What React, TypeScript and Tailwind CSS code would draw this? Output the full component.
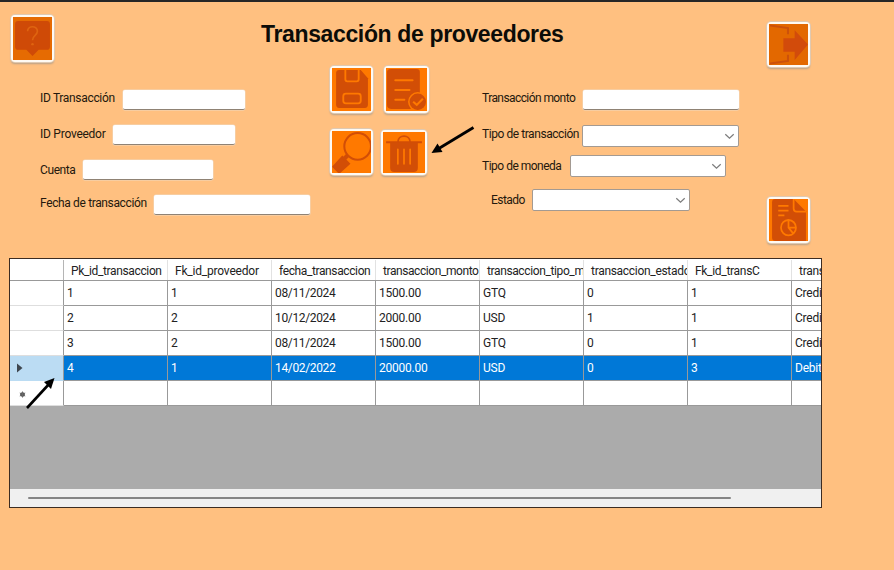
import React from "react";

const ORANGE = "#ff7900";
const DARK = "#d24e06";

function IconButton({ className, children }: { className: string; children: React.ReactNode }) {
  return (
    <button
      className={`shrink-0 rounded-[4px] border-[2.5px] border-[#fffaf3] shadow-[0_0_0_1px_#dfc9b2,0_2px_2px_#b9a188] ${className}`}
    >
      {children}
    </button>
  );
}

function TextField({ label, labelClass, inputClass, rowClass }: Record<string, string>) {
  return (
    <div className={`flex ${rowClass}`}>
      <label className={`shrink-0 whitespace-nowrap leading-[16px] ${labelClass}`}>{label}</label>
      <div className={`h-[20px] shrink-0 rounded-[2px] border-b border-[#8f8274] bg-white shadow-[0_0_0_0.5px_#efd9c2] ${inputClass}`} />
    </div>
  );
}

function SelectField({ label, labelClass, inputClass, rowClass }: Record<string, string>) {
  return (
    <div className={`flex ${rowClass}`}>
      <label className={`shrink-0 whitespace-nowrap leading-[16px] ${labelClass}`}>{label}</label>
      <div className={`flex h-[22px] shrink-0 items-center justify-end rounded-[2px] border border-[#a39a92] bg-white pr-[3px] ${inputClass}`}>
        <svg width="11" height="7" viewBox="0 0 11 7" fill="none" stroke="#7c7c7c" strokeWidth="1.2">
          <path d="M1.3 1.2 5.5 5.2 9.7 1.2" />
        </svg>
      </div>
    </div>
  );
}

const headers = [
  ["Pk_id_transaccion", "tracking-[-0.36px]"],
  ["Fk_id_proveedor", "tracking-[-0.2px]"],
  ["fecha_transaccion", "tracking-[-0.38px]"],
  ["transaccion_monto", "tracking-[-0.42px]"],
  ["transaccion_tipo_m", "tracking-[-0.38px]"],
  ["transaccion_estado", "tracking-[-0.3px]"],
  ["Fk_id_transC", "tracking-[-0.3px]"],
  ["trans", "tracking-[-0.3px]"],
];

const rows = [
  ["1", "1", "08/11/2024", "1500.00", "GTQ", "0", "1", "Credito"],
  ["2", "2", "10/12/2024", "2000.00", "USD", "1", "1", "Credito"],
  ["3", "2", "08/11/2024", "1500.00", "GTQ", "0", "1", "Credito"],
  ["4", "1", "14/02/2022", "20000.00", "USD", "0", "3", "Debito"],
  ["", "", "", "", "", "", "", ""],
];

function Grid() {
  return (
    <div className="ml-[9px] flex h-[250px] w-[813px] shrink-0 flex-col overflow-hidden border-[1.5px] border-[#3c2c22] bg-[#ababab] text-[12px] text-[#222]">
      <div className="flex h-[22px] w-[886px] shrink-0 border-b border-[#999] bg-white pt-px">
        <div className="w-[54px] shrink-0 border-r border-[#b5b5b5]" />
        {headers.map(([text, spacing]) => (
          <div key={text} className={`w-[104px] shrink-0 overflow-hidden whitespace-nowrap border-r border-[#e2e2e2] pl-[7px] leading-[22px] ${spacing}`}>
            {text}
          </div>
        ))}
      </div>
      {rows.map((row, i) => {
        const selected = i === 3;
        return (
          <div key={i} className={`flex h-[25px] w-[886px] shrink-0 ${selected ? "bg-[#0078d7] text-white" : "bg-white"}`}>
            <div
              className={`flex w-[54px] shrink-0 items-center border-b border-r border-r-[#999] pl-[7px] ${
                selected ? "border-b-[#bbdcf3] bg-[#bbdcf3]" : "border-b-[#dedede]"
              }`}
            >
              {selected && (
                <svg width="7" height="10" viewBox="0 0 7 10">
                  <path d="M0 0.5 5.5 5 0 9.5Z" fill="#3e464e" />
                </svg>
              )}
              {i === 4 && (
                <svg className="ml-[2px] mt-[2px]" width="7" height="7" viewBox="0 0 7 7" stroke="#6a6a6a" strokeWidth="1">
                  <circle cx="3.5" cy="3.5" r="2.3" fill="#4a4a4a" stroke="none" />
                  <path d="M3.5.5v6M.8 2l5.4 3M.8 5l5.4-3" />
                </svg>
              )}
            </div>
            {row.map((cell, j) => (
              <div
                key={j}
                className={`w-[104px] shrink-0 overflow-hidden whitespace-nowrap border-b border-r border-[#999] pl-[3px] leading-[25px] ${
                  j === 2 ? "tracking-[-0.35px]" : "tracking-[-0.25px]"
                }`}
              >
                {cell}
              </div>
            ))}
          </div>
        );
      })}
      <div className="mt-auto flex h-[18px] shrink-0 items-center bg-[#f0f0f0] pl-[18px]">
        <div className="h-[2px] w-[703px] rounded-full bg-[#858585]" />
      </div>
    </div>
  );
}

export default function App() {
  return (
    <main className="relative flex h-[570px] w-[894px] flex-col overflow-hidden border-t-2 border-[#262626] bg-[#ffc080] font-['Roboto','Liberation_Sans',sans-serif] text-[12px] text-[#24180d]">
      <header className="flex h-[63px] shrink-0 items-start">
        <IconButton className="ml-[11px] mt-[13px] h-[47px] w-[43px]">
          <svg className="block h-full w-full" viewBox="0 0 38 42" preserveAspectRatio="none">
            <path d="M0 0h38v42H0z" fill="#e66b02" />
            <path d="M5 4h28q3 0 3 3v22q0 3-3 3h-8l-6 6-6-6H5q-3 0-3-3V7q0-3 3-3Z" fill="#cf4a07" />
            <path d="M14.2 14c0-6 9.6-6 9.6 0 0 4-4.8 3.8-4.8 8.6" fill="none" stroke="#df6410" strokeWidth="1.6" />
            <circle cx="19" cy="26.5" r="1.2" fill="#df6410" />
          </svg>
        </IconButton>
        <h1 className="ml-[207px] mt-[18px] w-[304px] whitespace-nowrap font-['Liberation_Sans',sans-serif] text-[23px] font-bold leading-[28px] tracking-[-0.36px] text-[#0c0c08]">
          Transacción de proveedores
        </h1>
        <IconButton className="ml-[202px] mt-[20px] h-[45px] w-[43px]">
          <svg className="block h-full w-full" viewBox="0 0 38 40" preserveAspectRatio="none">
            <path d="M0 0h38v40H0z" fill="#e36800" />
            <path d="M1 1.5 18.5 4v6M1 38.5 18.5 36v-6" fill="none" stroke="#cc510b" strokeWidth="2" />
            <path d="M14 14h11V6l13 14-13 15v-8H14Z" fill="#d24b0b" />
          </svg>
        </IconButton>
      </header>

      <section className="flex h-[193px] shrink-0">
        <div className="w-[330px] pl-[40px]">
          <TextField label="ID Transacción" rowClass="mt-[25px]" labelClass="w-[83px] tracking-[-0.32px]" inputClass="w-[122px]" />
          <TextField label="ID Proveedor" rowClass="mt-[15px]" labelClass="w-[73px] mt-px tracking-[-0.25px]" inputClass="w-[122px]" />
          <TextField label="Cuenta" rowClass="mt-[15px]" labelClass="w-[43px] mt-[2px] tracking-[-0.4px]" inputClass="w-[130px]" />
          <TextField label="Fecha de transacción" rowClass="mt-[15px]" labelClass="w-[114px] tracking-[-0.36px]" inputClass="w-[156px]" />
        </div>

        <div className="w-[152px]">
          <div className="flex items-start gap-[11px] pt-px">
            <IconButton className="h-[47px] w-[43px]">
              <svg className="block h-full w-full" viewBox="0 0 38 42" preserveAspectRatio="none">
                <path d="M0 0h38v42H0z" fill={ORANGE} />
                <path d="M7 2h21l7 8v26q0 3-3 3H7q-3 0-3-3V5q0-3 3-3Z" fill={DARK} />
                <path d="M13 2v9q0 2 2 2h9q2 0 2-2V2M13.500 25H25.500q2.500 0 2.500 2.500V32q0 2.500-2.500 2.500H13.500Q11 34.500 11 32V27.500Q11 25 13.500 25Z" fill="none" stroke={ORANGE} strokeWidth="1.8" />
              </svg>
            </IconButton>
            <IconButton className="h-[47px] w-[45px]">
              <svg className="block h-full w-full" viewBox="0 0 40 42" preserveAspectRatio="none">
                <path d="M0 0h40v42H0z" fill={ORANGE} />
                <path d="M5 1h25q3 0 3 3v36H5q-4 0-4-4V4q0-3 4-3Z" fill={DARK} />
                <path d="M9 12h17M9 21.500h14M9 31h9" stroke={ORANGE} strokeWidth="1.8" strokeLinecap="round" />
                <circle cx="31" cy="33" r="9.500" fill={ORANGE} />
                <circle cx="31" cy="33" r="8" fill={DARK} />
                <path d="m26.500 33 3.500 3 6-6" fill="none" stroke={ORANGE} strokeWidth="2" />
              </svg>
            </IconButton>
          </div>
          <div className="mt-[16px] flex items-start gap-[8px]">
            <IconButton className="h-[46px] w-[43px]">
              <svg className="block h-full w-full" viewBox="0 0 38 41" preserveAspectRatio="none">
                <path d="M0 0h38v41H0z" fill={ORANGE} />
                <path d="m10 24 8 8-10 9H6L0 35Z" fill={DARK} />
                <path d="m11 28 6-6" stroke={DARK} strokeWidth="4" />
                <circle cx="25" cy="15" r="13" fill={ORANGE} stroke={DARK} strokeWidth="2" />
              </svg>
            </IconButton>
            <IconButton className="mt-px h-[45px] w-[46px]">
              <svg className="block h-full w-full" viewBox="0 0 41 40" preserveAspectRatio="none">
                <path d="M0 0h41v40H0z" fill={ORANGE} />
                <path d="M14.500 10c0-8 12-8 12 0M3 10h35" fill="none" stroke={DARK} strokeWidth="1.8" />
                <path d="M7 10h27v25q0 4-4 4H11q-4 0-4-4Z" fill={DARK} />
                <path d="M14.500 17v14M20.500 17v14M26.500 17v14" stroke={ORANGE} strokeWidth="1.7" strokeLinecap="round" />
              </svg>
            </IconButton>
          </div>
        </div>

        <div className="w-[284px]">
          <TextField label="Transacción monto" rowClass="mt-[25px]" labelClass="w-[101px] tracking-[-0.58px]" inputClass="w-[156px]" />
          <SelectField label="Tipo de transacción" rowClass="mt-[15px]" labelClass="w-[100px] mt-px tracking-[-0.44px]" inputClass="w-[157px]" />
          <SelectField label="Tipo de moneda" rowClass="mt-[8px]" labelClass="w-[88px] mt-[3px] tracking-[-0.5px]" inputClass="w-[156px]" />
          <SelectField label="Estado" rowClass="ml-[9px] mt-[12px]" labelClass="w-[41px] mt-[3px] tracking-[-0.55px]" inputClass="w-[158px]" />
        </div>

        <IconButton className="ml-[1px] mt-[132px] h-[46px] w-[43px]">
          <svg className="block h-full w-full" viewBox="0 0 38 40" preserveAspectRatio="none">
            <path d="M0 0h38v40H0z" fill={ORANGE} />
            <path d="M6 0h18l12 12v28H6q-3 0-3-3V3q0-3 3-3Z" fill={DARK} />
            <path d="M24 0v9q0 3 3 3h9M9 6.500h10M9 11h10M9 15.500h6" fill="none" stroke={ORANGE} strokeWidth="1.7" />
            <path d="M19 20a7.300 7.300 0 1 0 0 14.600 7.300 7.300 0 0 0 0-14.600v7.300l4.500 5.500M19 27.300h7" fill="none" stroke={ORANGE} strokeWidth="1.7" />
          </svg>
        </IconButton>
      </section>

      <Grid />

      <svg className="pointer-events-none absolute left-0 top-[-2px]" width="894" height="570" fill="black" stroke="black">
        <path d="M473.500 127.500 438 149" strokeWidth="2.800" fill="none" />
        <path d="m431.500 153 6-9.500 5 8.500Z" stroke="none" />
        <path d="M27 408 50 383" strokeWidth="2.600" fill="none" />
        <path d="m54.500 378-3.500 11-7-7Z" stroke="none" />
      </svg>
    </main>
  );
}
